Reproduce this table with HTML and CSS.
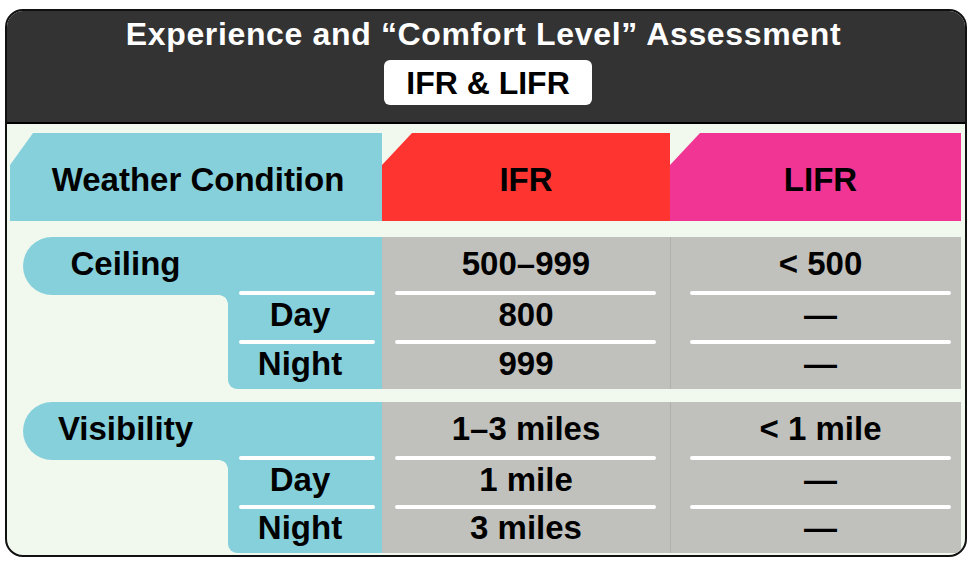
FILE: index.html
```html
<!DOCTYPE html>
<html>
<head>
<meta charset="utf-8">
<link rel="stylesheet" href="styles.css">
</head>
<body>
<div class="card">
  <div class="head">
    <div class="title">Experience and “Comfort Level” Assessment</div>
    <div class="badge">IFR &amp; LIFR</div>
  </div>
  <div class="body">
    <div class="hrow">
      <div class="hcell hwx">Weather Condition</div>
      <div class="hcell hifr">IFR</div>
      <div class="hcell hlifr">LIFR</div>
    </div>

    <div class="group">
      <div class="labels">
        <div class="pill">
          <div class="pill-text">Ceiling</div>
          <div class="rule rule-label"></div>
        </div>
        <div class="sub">
          <div class="row">Day</div>
          <div class="rule rule-label"></div>
          <div class="row">Night</div>
        </div>
      </div>
      <div class="col col-ifr">
        <div class="row row-top">500–999</div>
        <div class="rule rule-ifr"></div>
        <div class="row">800</div>
        <div class="rule rule-ifr"></div>
        <div class="row">999</div>
      </div>
      <div class="col col-lifr">
        <div class="row row-top">&lt; 500</div>
        <div class="rule rule-lifr"></div>
        <div class="row">—</div>
        <div class="rule rule-lifr"></div>
        <div class="row">—</div>
      </div>
    </div>

    <div class="group group-2">
      <div class="labels">
        <div class="pill">
          <div class="pill-text">Visibility</div>
          <div class="rule rule-label"></div>
        </div>
        <div class="sub">
          <div class="row">Day</div>
          <div class="rule rule-label"></div>
          <div class="row">Night</div>
        </div>
      </div>
      <div class="col col-ifr">
        <div class="row row-top">1–3 miles</div>
        <div class="rule rule-ifr"></div>
        <div class="row">1 mile</div>
        <div class="rule rule-ifr"></div>
        <div class="row">3 miles</div>
      </div>
      <div class="col col-lifr">
        <div class="row row-top">&lt; 1 mile</div>
        <div class="rule rule-lifr"></div>
        <div class="row">—</div>
        <div class="rule rule-lifr"></div>
        <div class="row">—</div>
      </div>
    </div>
  </div>
</div>
</body>
</html>
```

FILE: styles.css
```css
* { box-sizing: border-box; }
html, body { margin: 0; padding: 0; background: #ffffff; }
body {
  font-family: "Liberation Sans", Arial, Helvetica, sans-serif;
  font-weight: bold;
  color: #000;
}
.card {
  margin: 9px 0 0 5px;
  width: 962px;
  height: 548px;
  border: 2px solid #111;
  border-radius: 18px;
  overflow: hidden;
  background: #f1f8ee;
  display: flex;
  flex-direction: column;
}
.head {
  background: #333333;
  height: 113px;
  border-bottom: 2px solid #000;
  display: flex;
  flex-direction: column;
  align-items: center;
  padding-top: 5px;
}
.title {
  color: #fff;
  font-size: 32px;
  line-height: 36px;
  letter-spacing: 0.65px;
  padding-right: 5px;
}
.badge {
  margin-top: 8px;
  margin-left: 4px;
  background: #fff;
  border-radius: 6px;
  height: 45px;
  width: 208px;
  display: flex;
  align-items: center;
  justify-content: center;
  font-size: 32px;
  padding-top: 2px;
  color: #000;
}
.body {
  flex: 1;
  padding: 9px 4px 0 3px;
}
.hrow {
  display: grid;
  grid-template-columns: 372px 288px 1fr;
  height: 88px;
}
.hcell {
  display: flex;
  align-items: center;
  justify-content: center;
  font-size: 33px;
  padding-top: 6px;
}
.hwx {
  background: #85d0db;
  clip-path: polygon(23px 0, 100% 0, 100% 100%, 0 100%, 0 32px);
  padding-left: 4px;
}
.hifr {
  background: #fe3430;
  clip-path: polygon(30px 0, 100% 0, 100% 100%, 0 100%, 0 32px);
}
.hlifr {
  background: #f03594;
  clip-path: polygon(30px 0, 100% 0, 100% 100%, 0 100%, 0 32px);
  padding-left: 10px;
}
.group {
  display: flex;
  margin: 16px 0 0 13px;
  height: 152px;
}
.group-2 {
  margin-top: 13px;
  height: 151px;
}
.labels {
  width: 359px;
  display: flex;
  flex-direction: column;
}
.pill {
  background: #85d0db;
  height: 58px;
  border-radius: 29px 0 0 29px;
  display: flex;
  flex-direction: column;
}
.pill-text {
  width: 205px;
  height: 54px;
  display: flex;
  align-items: center;
  justify-content: center;
  font-size: 33px;
  padding-bottom: 1px;
}
.sub {
  position: relative;
  margin-left: 205px;
  flex: 1;
  background: #85d0db;
  border-bottom-left-radius: 9px;
  display: flex;
  flex-direction: column;
  padding-right: 10px;
}
.sub::before {
  content: "";
  position: absolute;
  left: -9px;
  top: 0;
  width: 9px;
  height: 9px;
  background: radial-gradient(circle at 0 100%, transparent 8.5px, #85d0db 9px);
}
.row {
  height: 45px;
  display: flex;
  align-items: center;
  justify-content: center;
  font-size: 33px;
  flex: 1;
  padding-bottom: 5px;
}
.row-top {
  height: 54px;
  flex: none;
  padding-bottom: 1px;
}
.rule {
  height: 4px;
  background: #fff;
  border-radius: 2px;
  flex: none;
}
.rule-label {
  margin: 0 7px 0 11px;
}
.pill .rule-label {
  margin-left: 216px;
}
.sub .rule-label {
  margin: 0 -3px 0 11px;
}
.col {
  background: #c0c1bd;
  display: flex;
  flex-direction: column;
}
.col-ifr {
  width: 288px;
}
.col-lifr {
  flex: 1;
  border-left: 1px solid #b0b1ad;
  padding-left: 9px;
}
.rule-ifr {
  margin: 0 14px 0 13px;
}
.rule-lifr {
  margin: 0 10px 0 10px;
}
```
